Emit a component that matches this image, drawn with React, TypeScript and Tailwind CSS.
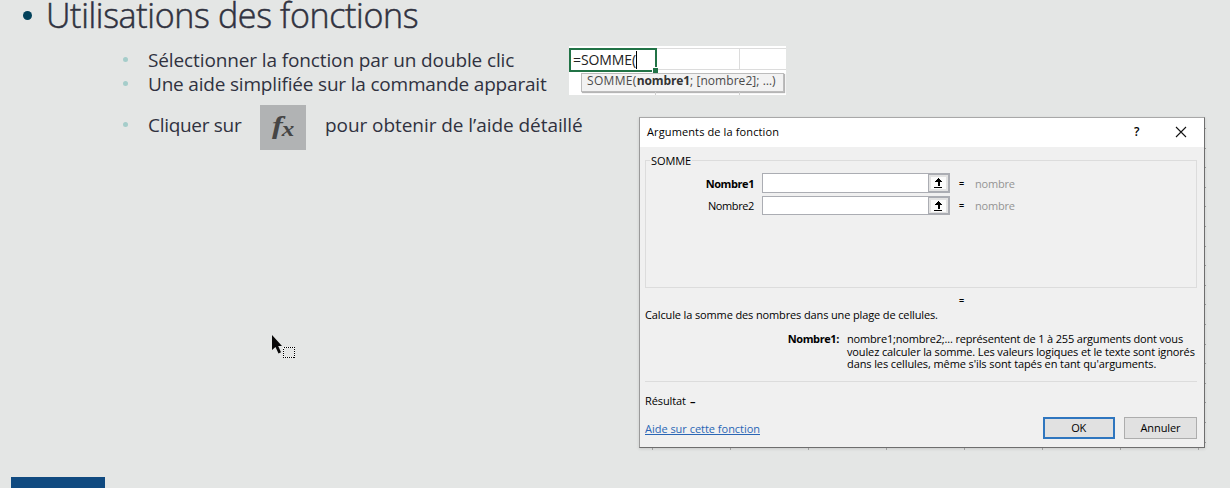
import type { ReactNode } from "react";

function Bullet({ className }: { className: string }) {
  return (
    <span className={`flex w-[29px] shrink-0 items-center pl-[4px] ${className}`}>
      <span className="size-[5px] rounded-full bg-[#a5cdca]" />
    </span>
  );
}

function ExcelSnippet() {
  return (
    <div className="flex h-[49px] w-[217px] shrink-0 flex-col bg-white">
      <div className="flex h-[26px] pt-[2px]">
        <div className="relative flex h-[24px] w-[88px] items-center border-2 border-[#217346] pl-[2px] text-[14px] leading-[20px] tracking-[-0.1px] text-[#222]">
          <span className="whitespace-nowrap">=SOMME(</span>
          <span className="h-[18px] w-px bg-black" />
          <span className="absolute -bottom-[3px] -right-[3px] size-[6px] border-l border-t border-white bg-[#217346]" />
        </div>
        <div className="h-[22px] w-[83px] border-b border-r border-t border-[#dcdcdc]" />
        <div className="h-[22px] flex-1 border-b border-t border-[#dcdcdc]" />
      </div>
      <div className="flex h-[23px] flex-col bg-white pt-px">
        <div className="ml-[12px] flex h-[19px] w-[203px] items-center whitespace-nowrap border border-[#bcbcbc] bg-[#f2f2f2] pb-[3px] pl-[5px] text-[12px] leading-[16px] text-[#4a4a4a] shadow-[1px_1px_1px_#b5b5b5]">
          <span className="tracking-[0.33px]">SOMME(</span>
          <span className="font-bold tracking-[-0.1px] text-[#333]">nombre1</span>
          <span className="tracking-[0.05px]">; [nombre2]; …)</span>
        </div>
        <div className="flex h-[3px]">
          <div className="w-[87px] border-r border-[#cfcfcf]" />
          <div className="w-[84px] border-r border-[#cfcfcf]" />
        </div>
      </div>
    </div>
  );
}

function ArgumentRow({ label, first }: { label: ReactNode; first?: boolean }) {
  return (
    <div className={first ? "flex h-[20px] items-center" : "flex h-[19px] items-center"}>
      <div className="w-[104px] text-right">{label}</div>
      <div className="ml-[8px] flex h-full w-[188px] border border-[#abadb3] bg-white">
        <div className="flex-1" />
        <div className="flex w-[21px] items-center justify-center border-l border-[#abadb3] bg-[#e3e3e3] shadow-[inset_-1px_0_0_#abadb3,inset_0_1px_0_#abadb3,inset_0_-1px_0_#abadb3]">
          <svg className="mr-px" width="15" height="12" viewBox="0 0 15 12" shapeRendering="crispEdges">
            <rect width="15" height="12" fill="#fbfbfb" />
            <path d="M7 1h1v1h1v1h1v1h1v1h-1v0h-1v4h-2v-4h-3v-1h1v-1h1v-1h1z" fill="#000" />
            <path d="M3 10h8v1H3z" fill="#000" />
          </svg>
        </div>
      </div>
      <span className="ml-[9px] w-[16px] text-[9px] font-bold">=</span>
      <span className="tracking-[-0.2px] text-[#949494]">nombre</span>
    </div>
  );
}

function FunctionDialog() {
  return (
    <div className="flex h-[331px] w-[566px] shrink-0 flex-col border border-b-[#6e6e6e] border-l-[#9a9a9a] border-r-[#6e6e6e] border-t-[#a8a8a8] bg-[#f0f0f0] text-[11px] leading-[13px] text-black shadow-[0_1px_3px_rgba(0,0,0,0.12)]">
      <div className="flex h-[29px] shrink-0 items-center bg-white pb-[2px] pl-[7px]">
        <span className="flex-1 tracking-[0.12px]">Arguments de la fonction</span>
        <span className="w-[41px] text-[12px] font-semibold">?</span>
        <svg className="mr-[17px]" width="12" height="12" viewBox="0 0 12 12" stroke="#111" strokeWidth="1.1">
          <path d="M1 1l10 10M11 1L1 11" />
        </svg>
      </div>
      <div className="flex flex-1 flex-col pl-[5px] pr-[7px] pt-[7px]">
        <fieldset className="h-[134px] border border-[#dcdcdc] pl-[4px]">
          <legend className="px-px tracking-[-0.1px]">SOMME</legend>
          <div className="flex flex-col gap-[3px] pt-[6px]">
            <ArgumentRow first label={<span className="font-bold tracking-[-0.42px]">Nombre1</span>} />
            <ArgumentRow label={<span className="tracking-[-0.38px]">Nombre2</span>} />
          </div>
        </fieldset>
        <div className="mt-[6px] pl-[314px] text-[9px] font-bold">=</div>
        <p className="mt-px tracking-[-0.13px]">Calcule la somme des nombres dans une plage de cellules.</p>
        <div className="mt-[12px] flex whitespace-nowrap leading-[12.5px]">
          <div className="w-[194px] text-right font-bold tracking-[-0.4px]">Nombre1:</div>
          <div className="ml-[8px]">
            <p className="tracking-[-0.17px]">nombre1;nombre2;... représentent de 1 à 255 arguments dont vous</p>
            <p className="tracking-[-0.13px]">voulez calculer la somme. Les valeurs logiques et le texte sont ignorés</p>
            <p className="tracking-[-0.1px]">dans les cellules, même s'ils sont tapés en tant qu'arguments.</p>
          </div>
        </div>
        <hr className="mt-[10px] border-[#dcdcdc]" />
        <div className="mt-[12px] flex">
          <span className="tracking-[-0.1px]">Résultat</span>
          <span className="ml-[4px] font-bold">–</span>
        </div>
        <div className="mt-[10px] flex h-[22px]">
          <a className="mt-[5px] h-[13px] flex-1 tracking-[-0.02px] text-[#2a66b5]">
            <span className="inline-block h-[13px] border-b border-[#2a66b5]">Aide sur cette fonction</span>
          </a>
          <button className="w-[72px] border-2 border-[#2f76bf] bg-[#e1e1e1] pr-px tracking-[-0.3px]">OK</button>
          <button className="ml-[9px] w-[73px] border border-[#adadad] bg-[#e1e1e1] tracking-[-0.1px]">Annuler</button>
        </div>
      </div>
    </div>
  );
}

export default function App() {
  return (
    <div className="relative flex h-[488px] w-[1230px] flex-col overflow-hidden bg-[#e4e6e5] font-['Open_Sans','Noto_Sans',sans-serif] text-[#30323f]">
      <div className="flex h-[46px] shrink-0 pl-[23px]">
        <span className="mt-[11px] size-[9px] rounded-full bg-[#02415a]" />
        <h1 className="ml-[14px] whitespace-nowrap pt-px text-[34px] font-light leading-[28px] tracking-[-0.35px] [-webkit-text-stroke:0.5px_#30323f]">Utilisations des fonctions</h1>
      </div>

      <div className="flex h-[49px] shrink-0">
        <ul className="w-[569px] shrink-0 pl-[119px] pt-[2px] text-[19px] leading-[24px]">
          <li className="flex h-[24px]">
            <Bullet className="h-[23px]" />
            <span className="whitespace-nowrap tracking-[-0.12px]">Sélectionner la fonction par un double clic</span>
          </li>
          <li className="flex h-[24px]">
            <Bullet className="h-[23px]" />
            <span className="whitespace-nowrap tracking-[-0.19px]">Une aide simplifiée sur la commande apparait</span>
          </li>
        </ul>
        <ExcelSnippet />
      </div>

      <div className="flex h-[382px] shrink-0">
        <div className="flex h-[64px] w-[639px] shrink-0 whitespace-nowrap pl-[119px] pt-[10px] text-[19px] leading-[24px]">
          <Bullet className="mt-[8px] h-[23px]" />
          <span className="mt-[8px] w-[112px] tracking-[-0.3px]">Cliquer sur</span>
          <div className="flex h-[45px] w-[46px] items-center justify-center bg-[#b1b3b4] pb-[4px] font-['Liberation_Serif',serif] font-bold italic text-[#454545]">
            <span className="scale-x-125 text-[26px] leading-[26px]">f</span>
            <span className="ml-px scale-x-125 pt-[6px] text-[20px] leading-[20px]">x</span>
          </div>
          <span className="ml-[19px] mt-[8px] tracking-[-0.06px]">pour obtenir de l’aide détaillé</span>
        </div>
        <div className="pt-[22px]">
          <div className="flex">
            <FunctionDialog />
            <div className="w-px bg-[repeating-linear-gradient(to_bottom,transparent_0,transparent_11px,#999_11px,#999_12px,transparent_12px,transparent_19.6px)]" />
          </div>
          <div className="h-[2px] w-[566px] bg-[repeating-linear-gradient(to_right,transparent_0,transparent_13px,#aaa_13px,#aaa_14px,transparent_14px,transparent_78px)]" />
        </div>
      </div>

      <div className="ml-[11px] h-[11px] w-[94px] bg-[#104a80]" />

      <svg className="absolute left-[271px] top-[334px]" width="26" height="26" viewBox="0 0 26 26">
        <path d="M1 1v15l3.5-3 3 6.500 2.500-1.200-2.800-6.300H11z" fill="#080808" />
        <path d="M12.500 13.500h11v10h-11z" fill="none" stroke="#fff" />
        <path d="M12.500 13.500h11v10h-11z" fill="none" stroke="#000" strokeDasharray="1 1" shapeRendering="crispEdges" />
      </svg>
    </div>
  );
}
